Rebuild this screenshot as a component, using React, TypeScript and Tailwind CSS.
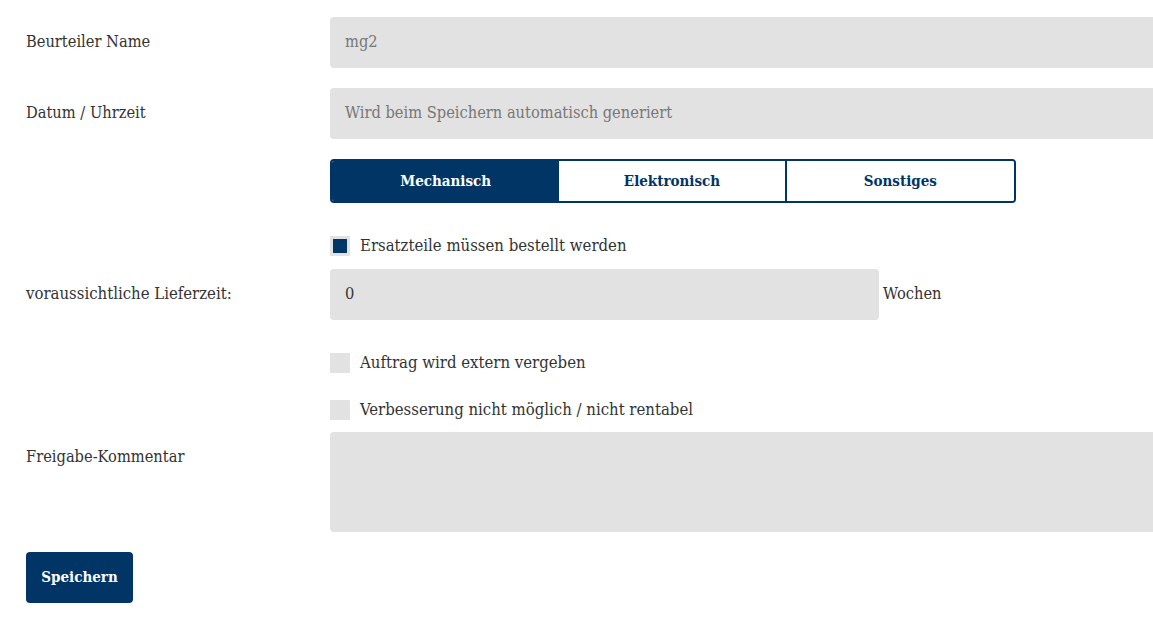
import React from 'react';

const font = "font-['DejaVu_Serif_Condensed','DejaVu_Serif',serif]";

const Checkbox: React.FC<{ checked?: boolean; label: string }> = ({ checked, label }) => (
  <label className="flex items-center gap-[10px] h-5 leading-5 text-[16.6px] text-[#333]">
    <span className="w-5 h-5 shrink-0 bg-[#e2e2e2] flex items-center justify-center">
      {checked && <span className="w-[14px] h-[14px] bg-[#003566]"></span>}
    </span>
    {label}
  </label>
);

const App: React.FC = () => {
  return (
    <div className={`w-[1153px] h-[627px] overflow-hidden bg-white ${font} text-[#333]`}>
      <div className="pl-[26px] pt-[17px] flex flex-col">
        <div className="flex">
          <div className="w-[304px] shrink-0 h-[51px] flex items-center text-[16.3px]">Beurteiler Name</div>
          <div className="w-[850px] shrink-0 h-[51px] bg-[#e2e2e2] rounded-[4px] px-[15px] flex items-center text-[16.3px] text-[#777]">mg2</div>
        </div>

        <div className="flex mt-[20px]">
          <div className="w-[304px] shrink-0 h-[51px] flex items-center text-[16.3px]">Datum / Uhrzeit</div>
          <div className="w-[850px] shrink-0 h-[51px] bg-[#e2e2e2] rounded-[4px] px-[15px] flex items-center text-[16.3px] text-[#777]">
            Wird beim Speichern automatisch generiert
          </div>
        </div>

        <div className="flex mt-[20px]">
          <div className="w-[304px] shrink-0"></div>
          <div className="w-[686px] shrink-0 h-[44px] grid grid-cols-3 border-2 border-[#003566] rounded-[4px] overflow-hidden text-[15px] font-bold text-[#003566]">
            <button className="bg-[#003566] text-white">Mechanisch</button>
            <button className="bg-white border-r-2 border-[#003566]">Elektronisch</button>
            <button className="bg-white">Sonstiges</button>
          </div>
        </div>

        <div className="flex mt-[33px]">
          <div className="w-[304px] shrink-0"></div>
          <Checkbox checked label="Ersatzteile müssen bestellt werden" />
        </div>

        <div className="flex mt-[13px] items-center">
          <div className="w-[304px] shrink-0 h-[51px] flex items-center text-[16.6px]">voraussichtliche Lieferzeit:</div>
          <div className="w-[549px] shrink-0 h-[51px] bg-[#e2e2e2] rounded-[4px] px-[15px] flex items-center text-[16.3px] text-[#333]">0</div>
          <span className="ml-[4px] text-[16.3px]">Wochen</span>
        </div>

        <div className="flex mt-[33px]">
          <div className="w-[304px] shrink-0"></div>
          <Checkbox label="Auftrag wird extern vergeben" />
        </div>

        <div className="flex mt-[27px]">
          <div className="w-[304px] shrink-0"></div>
          <Checkbox label="Verbesserung nicht möglich / nicht rentabel" />
        </div>

        <div className="flex mt-[12px]">
          <div className="w-[304px] shrink-0 h-[51px] flex items-center text-[16.3px]">Freigabe-Kommentar</div>
          <div className="w-[850px] shrink-0 h-[100px] bg-[#e2e2e2] rounded-[4px]"></div>
        </div>

        <div className="mt-[20px]">
          <button className="h-[51px] w-[107px] bg-[#003566] text-white font-bold text-[15px] rounded-[4px]">Speichern</button>
        </div>
      </div>
    </div>
  );
};

export default App;
